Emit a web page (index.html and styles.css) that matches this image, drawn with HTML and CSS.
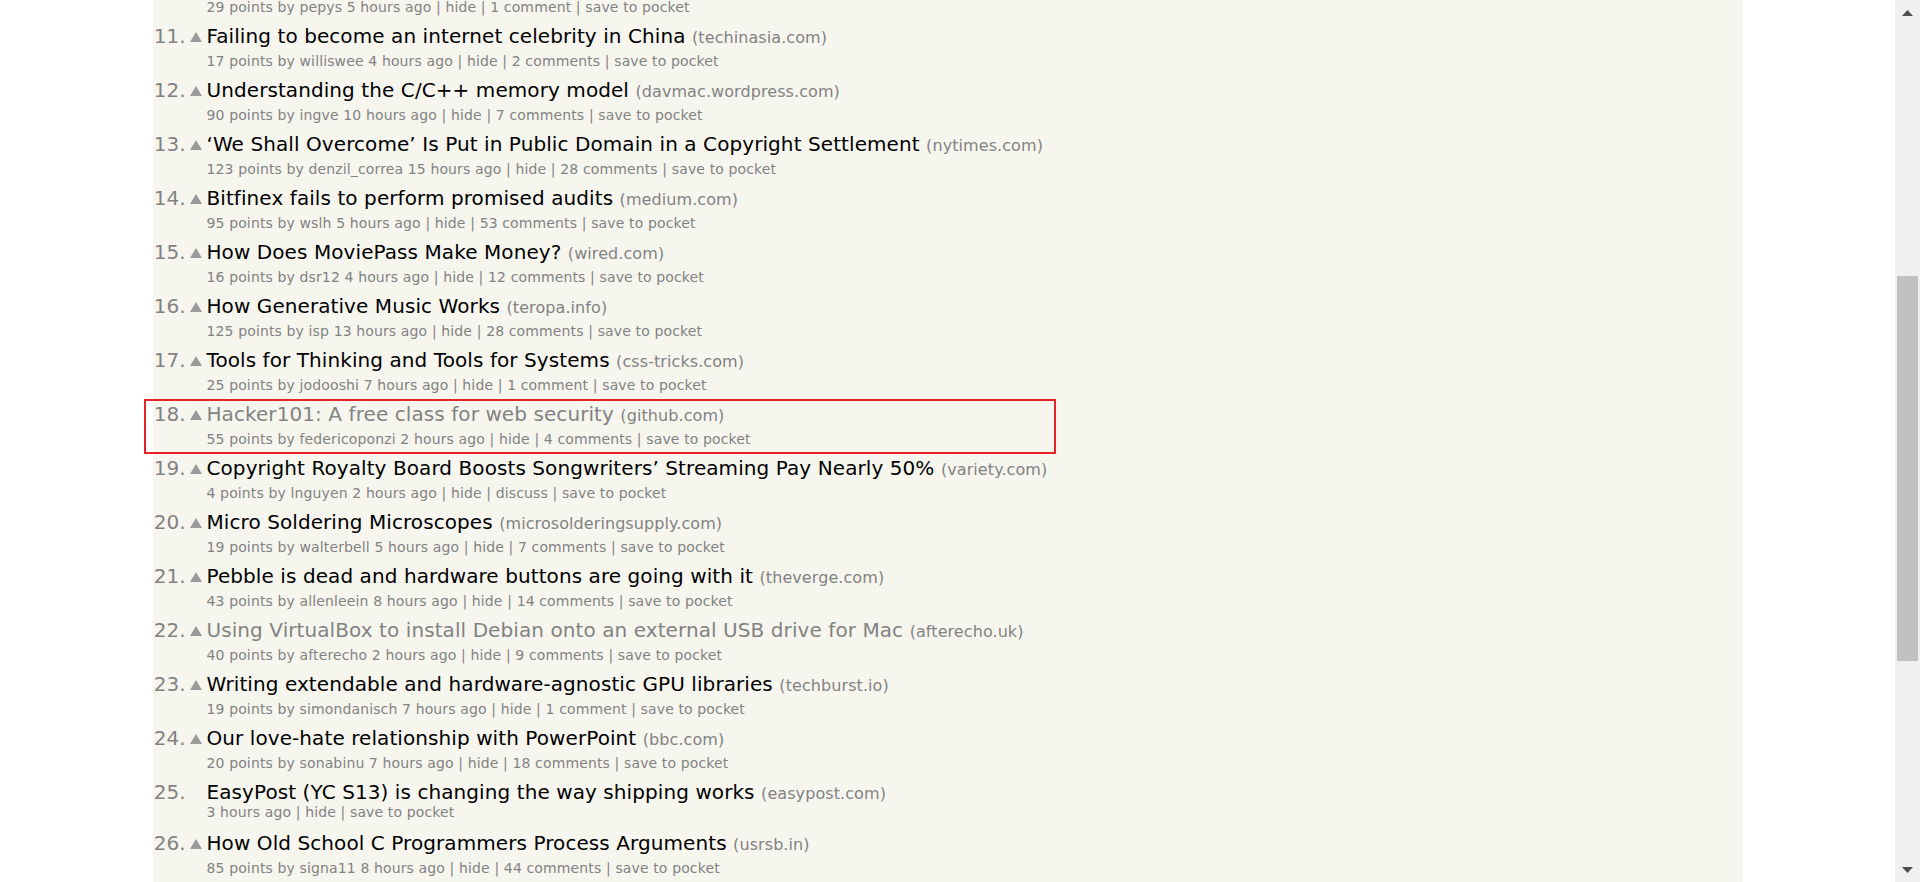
FILE: index.html
```html
<!DOCTYPE html>
<html lang="en">
<head>
<meta charset="utf-8">
<title>Hacker News</title>
<link rel="stylesheet" href="styles.css">
</head>
<body>
<div class="window">
  <main class="page">
    <div class="itemlist">
      <div class="item partial">
        <div class="subtext">29 points by <a>pepys</a> <a>5 hours ago</a> | <a>hide</a> | <a>1&nbsp;comment</a> | <a>save to pocket</a></div>
      </div>

      <div class="item">
        <div class="titlerow"><span class="rank">11.</span><span class="votelinks"><svg class="arrow" viewBox="0 0 12 10"><polygon points="6,0 12,10 0,10"/></svg></span><span class="titleline"><a class="storylink">Failing to become an internet celebrity in China</a> <span class="sitebit">(<a>techinasia.com</a>)</span></span></div>
        <div class="subtext">17 points by <a>williswee</a> <a>4 hours ago</a> | <a>hide</a> | <a>2&nbsp;comments</a> | <a>save to pocket</a></div>
      </div>

      <div class="item">
        <div class="titlerow"><span class="rank">12.</span><span class="votelinks"><svg class="arrow" viewBox="0 0 12 10"><polygon points="6,0 12,10 0,10"/></svg></span><span class="titleline"><a class="storylink">Understanding the C/C++ memory model</a> <span class="sitebit">(<a>davmac.wordpress.com</a>)</span></span></div>
        <div class="subtext">90 points by <a>ingve</a> <a>10 hours ago</a> | <a>hide</a> | <a>7&nbsp;comments</a> | <a>save to pocket</a></div>
      </div>

      <div class="item">
        <div class="titlerow"><span class="rank">13.</span><span class="votelinks"><svg class="arrow" viewBox="0 0 12 10"><polygon points="6,0 12,10 0,10"/></svg></span><span class="titleline"><a class="storylink">‘We Shall Overcome’ Is Put in Public Domain in a Copyright Settlement</a> <span class="sitebit">(<a>nytimes.com</a>)</span></span></div>
        <div class="subtext">123 points by <a>denzil_correa</a> <a>15 hours ago</a> | <a>hide</a> | <a>28&nbsp;comments</a> | <a>save to pocket</a></div>
      </div>

      <div class="item">
        <div class="titlerow"><span class="rank">14.</span><span class="votelinks"><svg class="arrow" viewBox="0 0 12 10"><polygon points="6,0 12,10 0,10"/></svg></span><span class="titleline"><a class="storylink">Bitfinex fails to perform promised audits</a> <span class="sitebit">(<a>medium.com</a>)</span></span></div>
        <div class="subtext">95 points by <a>wslh</a> <a>5 hours ago</a> | <a>hide</a> | <a>53&nbsp;comments</a> | <a>save to pocket</a></div>
      </div>

      <div class="item">
        <div class="titlerow"><span class="rank">15.</span><span class="votelinks"><svg class="arrow" viewBox="0 0 12 10"><polygon points="6,0 12,10 0,10"/></svg></span><span class="titleline"><a class="storylink">How Does MoviePass Make Money?</a> <span class="sitebit">(<a>wired.com</a>)</span></span></div>
        <div class="subtext">16 points by <a>dsr12</a> <a>4 hours ago</a> | <a>hide</a> | <a>12&nbsp;comments</a> | <a>save to pocket</a></div>
      </div>

      <div class="item">
        <div class="titlerow"><span class="rank">16.</span><span class="votelinks"><svg class="arrow" viewBox="0 0 12 10"><polygon points="6,0 12,10 0,10"/></svg></span><span class="titleline"><a class="storylink">How Generative Music Works</a> <span class="sitebit">(<a>teropa.info</a>)</span></span></div>
        <div class="subtext">125 points by <a>isp</a> <a>13 hours ago</a> | <a>hide</a> | <a>28&nbsp;comments</a> | <a>save to pocket</a></div>
      </div>

      <div class="item">
        <div class="titlerow"><span class="rank">17.</span><span class="votelinks"><svg class="arrow" viewBox="0 0 12 10"><polygon points="6,0 12,10 0,10"/></svg></span><span class="titleline"><a class="storylink">Tools for Thinking and Tools for Systems</a> <span class="sitebit">(<a>css-tricks.com</a>)</span></span></div>
        <div class="subtext">25 points by <a>jodooshi</a> <a>7 hours ago</a> | <a>hide</a> | <a>1&nbsp;comment</a> | <a>save to pocket</a></div>
      </div>

      <div class="item highlighted">
        <div class="titlerow"><span class="rank">18.</span><span class="votelinks"><svg class="arrow" viewBox="0 0 12 10"><polygon points="6,0 12,10 0,10"/></svg></span><span class="titleline"><a class="storylink visited">Hacker101: A free class for web security</a> <span class="sitebit">(<a>github.com</a>)</span></span></div>
        <div class="subtext">55 points by <a>federicoponzi</a> <a>2 hours ago</a> | <a>hide</a> | <a>4&nbsp;comments</a> | <a>save to pocket</a></div>
        <div class="marker"></div>
      </div>

      <div class="item">
        <div class="titlerow"><span class="rank">19.</span><span class="votelinks"><svg class="arrow" viewBox="0 0 12 10"><polygon points="6,0 12,10 0,10"/></svg></span><span class="titleline"><a class="storylink">Copyright Royalty Board Boosts Songwriters’ Streaming Pay Nearly 50%</a> <span class="sitebit">(<a>variety.com</a>)</span></span></div>
        <div class="subtext">4 points by <a>lnguyen</a> <a>2 hours ago</a> | <a>hide</a> | <a>discuss</a> | <a>save to pocket</a></div>
      </div>

      <div class="item">
        <div class="titlerow"><span class="rank">20.</span><span class="votelinks"><svg class="arrow" viewBox="0 0 12 10"><polygon points="6,0 12,10 0,10"/></svg></span><span class="titleline"><a class="storylink">Micro Soldering Microscopes</a> <span class="sitebit">(<a>microsolderingsupply.com</a>)</span></span></div>
        <div class="subtext">19 points by <a>walterbell</a> <a>5 hours ago</a> | <a>hide</a> | <a>7&nbsp;comments</a> | <a>save to pocket</a></div>
      </div>

      <div class="item">
        <div class="titlerow"><span class="rank">21.</span><span class="votelinks"><svg class="arrow" viewBox="0 0 12 10"><polygon points="6,0 12,10 0,10"/></svg></span><span class="titleline"><a class="storylink">Pebble is dead and hardware buttons are going with it</a> <span class="sitebit">(<a>theverge.com</a>)</span></span></div>
        <div class="subtext">43 points by <a>allenleein</a> <a>8 hours ago</a> | <a>hide</a> | <a>14&nbsp;comments</a> | <a>save to pocket</a></div>
      </div>

      <div class="item">
        <div class="titlerow"><span class="rank">22.</span><span class="votelinks"><svg class="arrow" viewBox="0 0 12 10"><polygon points="6,0 12,10 0,10"/></svg></span><span class="titleline"><a class="storylink visited">Using VirtualBox to install Debian onto an external USB drive for Mac</a> <span class="sitebit">(<a>afterecho.uk</a>)</span></span></div>
        <div class="subtext">40 points by <a>afterecho</a> <a>2 hours ago</a> | <a>hide</a> | <a>9&nbsp;comments</a> | <a>save to pocket</a></div>
      </div>

      <div class="item">
        <div class="titlerow"><span class="rank">23.</span><span class="votelinks"><svg class="arrow" viewBox="0 0 12 10"><polygon points="6,0 12,10 0,10"/></svg></span><span class="titleline"><a class="storylink">Writing extendable and hardware-agnostic GPU libraries</a> <span class="sitebit">(<a>techburst.io</a>)</span></span></div>
        <div class="subtext">19 points by <a>simondanisch</a> <a>7 hours ago</a> | <a>hide</a> | <a>1&nbsp;comment</a> | <a>save to pocket</a></div>
      </div>

      <div class="item">
        <div class="titlerow"><span class="rank">24.</span><span class="votelinks"><svg class="arrow" viewBox="0 0 12 10"><polygon points="6,0 12,10 0,10"/></svg></span><span class="titleline"><a class="storylink">Our love-hate relationship with PowerPoint</a> <span class="sitebit">(<a>bbc.com</a>)</span></span></div>
        <div class="subtext">20 points by <a>sonabinu</a> <a>7 hours ago</a> | <a>hide</a> | <a>18&nbsp;comments</a> | <a>save to pocket</a></div>
      </div>

      <div class="item job">
        <div class="titlerow"><span class="rank">25.</span><span class="votelinks"></span><span class="titleline"><a class="storylink">EasyPost (YC S13) is changing the way shipping works</a> <span class="sitebit">(<a>easypost.com</a>)</span></span></div>
        <div class="subtext"><a>3 hours ago</a> | <a>hide</a> | <a>save to pocket</a></div>
      </div>

      <div class="item">
        <div class="titlerow"><span class="rank">26.</span><span class="votelinks"><svg class="arrow" viewBox="0 0 12 10"><polygon points="6,0 12,10 0,10"/></svg></span><span class="titleline"><a class="storylink">How Old School C Programmers Process Arguments</a> <span class="sitebit">(<a>usrsb.in</a>)</span></span></div>
        <div class="subtext">85 points by <a>signa11</a> <a>8 hours ago</a> | <a>hide</a> | <a>44&nbsp;comments</a> | <a>save to pocket</a></div>
      </div>
    </div>
  </main>

  <div class="scrollbar">
    <div class="sb-button"><svg class="sb-arrow" viewBox="0 0 11 6"><polygon points="5.5,0 11,6 0,6"/></svg></div>
    <div class="sb-before"></div>
    <div class="sb-thumb"></div>
    <div class="sb-after"></div>
    <div class="sb-button down"><svg class="sb-arrow" viewBox="0 0 11 6"><polygon points="0,0 11,0 5.5,6"/></svg></div>
  </div>
</div>
</body>
</html>
```

FILE: styles.css
```css
html, body {
  margin: 0;
  padding: 0;
  height: 882px;
  overflow: hidden;
}

body {
  font-family: Verdana, "DejaVu Sans", Geneva, sans-serif;
  background: #ffffff;
}

.window {
  display: flex;
  height: 882px;
}

.page {
  flex: 1;
  display: flex;
  justify-content: center;
  overflow: hidden;
  background: #ffffff;
}

.itemlist {
  width: 1590px;
  background: #f6f6ef;
  display: flex;
  flex-direction: column;
}

.item {
  position: relative;
  padding-bottom: 7px;
}

.item.partial {
  margin-top: -2px;
}

.titlerow {
  display: flex;
  align-items: flex-start;
  height: 29px;
  font-size: 20px;
  line-height: 26px;
  white-space: nowrap;
}

.item.job {
  padding-bottom: 9px;
}

.item.job .titlerow {
  height: 24px;
}

.rank {
  width: 33px;
  flex: none;
  text-align: right;
  color: #828282;
}

.votelinks {
  width: 21px;
  flex: none;
  display: flex;
  justify-content: center;
  padding-top: 9px;
}

.arrow {
  width: 12px;
  height: 10px;
  fill: #9a9a9a;
  display: block;
}

.titleline {
  color: #000000;
  letter-spacing: 0.08px;
}

.storylink {
  color: #000000;
  text-decoration: none;
}

.storylink.visited {
  color: #828282;
}

.sitebit {
  font-size: 16px;
  color: #828282;
}

.sitebit a {
  color: #828282;
}

.subtext {
  padding-left: 54px;
  font-size: 14px;
  line-height: 18px;
  letter-spacing: 0.13px;
  color: #828282;
  white-space: nowrap;
}

.subtext a {
  color: #828282;
  text-decoration: none;
}

.marker {
  position: absolute;
  left: -9px;
  top: -2px;
  width: 908px;
  height: 51px;
  border: 2px solid #e8202a;
  pointer-events: none;
}

/* fake window scrollbar */
.scrollbar {
  width: 25px;
  flex: none;
  background: #f0f0f0;
  display: flex;
  flex-direction: column;
  align-items: center;
}

.sb-button {
  height: 25px;
  flex: none;
  display: flex;
  justify-content: center;
  align-items: center;
  align-self: stretch;
}

.sb-arrow {
  width: 11px;
  height: 6px;
  fill: #505050;
  display: block;
}

.sb-before {
  height: 251px;
  flex: none;
}

.sb-thumb {
  width: 21px;
  height: 385px;
  flex: none;
  background: #c1c1c1;
}

.sb-after {
  flex: 1;
}
```
